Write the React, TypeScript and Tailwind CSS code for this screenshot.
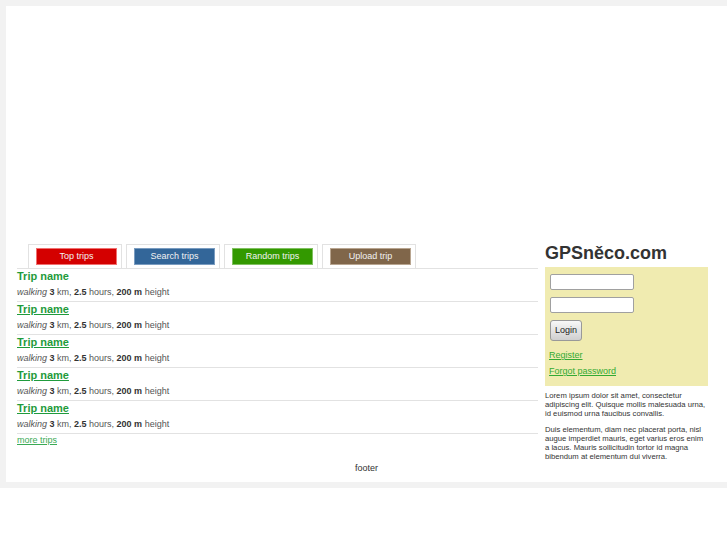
import React from "react"

const tabs = [
  { label: "Top trips", color: "bg-[#d40000] border-[#f07070]" },
  { label: "Search trips", color: "bg-[#336699] border-[#7a9cc0]" },
  { label: "Random trips", color: "bg-[#339900] border-[#80c060]" },
  { label: "Upload trip", color: "bg-[#80664a] border-[#b8a590]" },
]

const trips = [0, 1, 2, 3, 4]

export default function App() {
  return (
    <div className="bg-[#f2f2f2] pt-[6px] pl-[6px] pb-[6px] text-[#333]" style={{ fontFamily: '"Liberation Sans", Arial, sans-serif' }}>
      <div className="bg-white">
        {/* map placeholder */}
        <div className="h-[235px]" />

        <div className="flex">
          {/* Left column */}
          <div className="w-[521px] ml-[11px]">
            <ul className="flex gap-[4px] pl-[11px] mt-[3px] border-b border-[#e2e2e2]">
              {tabs.map((tab) => (
                <li key={tab.label} className="border border-b-0 border-[#e2e2e2] pt-[3px] pb-[3px] pl-[7px] pr-[4px]">
                  <span
                    className={`flex items-center justify-center w-[81px] h-[17px] border text-[9px] text-[#f2f2f2] ${tab.color}`}
                  >
                    {tab.label}
                  </span>
                </li>
              ))}
            </ul>

            {trips.map((i) => (
              <div key={i} className="border-b border-[#e2e2e2]">
                <a
                  href="#"
                  className={`block text-[11px] leading-[15px] font-bold text-[#1f9b3c] ${i === 0 ? "no-underline" : "underline"}`}
                >
                  Trip name
                </a>
                <div className="text-[9px] leading-[17px] text-[#555]">
                  <i>walking</i> <b className="text-[#333]">3</b> km, <b className="text-[#333]">2.5</b> hours,{" "}
                  <b className="text-[#333]">200 m</b> height
                </div>
              </div>
            ))}
            <a href="#" className="block w-fit mt-[1px] text-[9px] leading-[11px] text-[#3aaa55] underline">
              more trips
            </a>
          </div>

          {/* Right column */}
          <div className="w-[163px] ml-[7px]">
            <div className="text-[18px] leading-[24px] font-bold text-[#333] mb-[2px]">GPSněco.com</div>
            <div className="bg-[#f0ebb0] pt-[7px] pl-[5px] pb-[9px]">
              <input type="text" className="block w-[84px] h-[16px] bg-white border border-[#a0a0a0] rounded-[2px]" />
              <input type="password" className="block mt-[7px] w-[84px] h-[16px] bg-white border border-[#a0a0a0] rounded-[2px]" />
              <button className="block mt-[7px] w-[32px] h-[21px] text-[9px] text-[#222] border border-[#999] rounded-[3px] bg-gradient-to-b from-[#f8f8f8] to-[#cfcfcf]">
                Login
              </button>
              <a href="#" className="block w-fit mt-[8px] -ml-[1px] text-[9px] leading-[12px] text-[#33aa33] underline">
                Register
              </a>
              <a href="#" className="block w-fit mt-[4px] -ml-[1px] text-[9px] leading-[12px] text-[#33aa33] underline">
                Forgot password
              </a>
            </div>
            <p className="mt-[5px] text-[7.7px] leading-[9px] text-[#333]">
              Lorem ipsum dolor sit amet, consectetur adipiscing elit. Quisque mollis malesuada urna, id euismod urna
              faucibus convallis.
            </p>
            <p className="mt-[7px] text-[7.7px] leading-[9px] text-[#333]">
              Duis elementum, diam nec placerat porta, nisl augue imperdiet mauris, eget varius eros enim a lacus. Mauris
              sollicitudin tortor id magna bibendum at elementum dui viverra.
            </p>
          </div>
        </div>

        <div className="text-center text-[9px] leading-[12px] text-[#333] pt-[1px] pb-[8px]">footer</div>
      </div>
    </div>
  )
}
